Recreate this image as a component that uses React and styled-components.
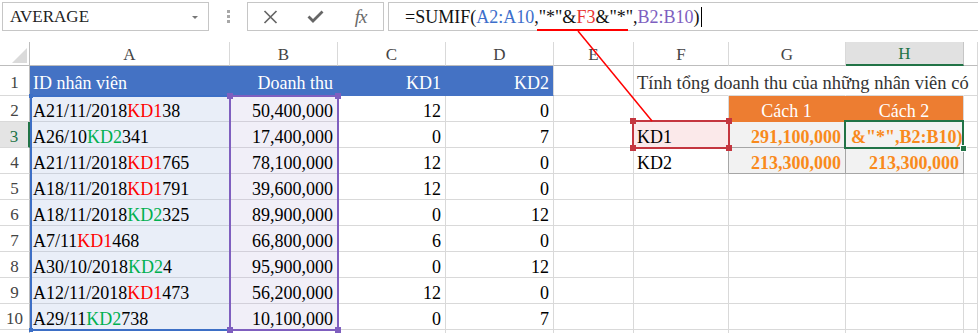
import React from "react";
import styled, { createGlobalStyle } from "styled-components";

const GlobalStyle = createGlobalStyle`
  html, body {
    margin: 0;
    padding: 0;
    background: #fff;
    overflow: hidden;
  }
  body {
    font-family: "Liberation Serif", "Times New Roman", serif;
  }
`;

const Page = styled.div`
  position: relative;
  width: 978px;
  height: 333px;
  overflow: hidden;
`;

/* ---------- formula bar ---------- */

const FormulaBar = styled.div`
  display: flex;
  align-items: flex-start;
  height: 42px;
  padding: 2px 0 0 2px;
  box-sizing: border-box;
`;

const NameBox = styled.div`
  width: 207px;
  height: 29px;
  box-sizing: border-box;
  border: 1px solid #c6c6c6;
  display: flex;
  align-items: center;
  justify-content: space-between;
  padding: 0 10px 0 7px;
  font-family: "Liberation Serif", "Times New Roman", serif;
  font-size: 17px;
  color: #222;
`;

const DropArrow = styled.span`
  width: 0;
  height: 0;
  border-left: 3px solid transparent;
  border-right: 3px solid transparent;
  border-top: 3px solid #777;
  margin-top: 1px;
`;

const Grip = styled.div`
  display: flex;
  flex-direction: column;
  gap: 2px;
  margin: 8px 17px 0 18px;
`;

const GripDot = styled.span`
  width: 3px;
  height: 3px;
  background: #a8a8a8;
`;

const ButtonBox = styled.div`
  width: 137px;
  height: 29px;
  box-sizing: border-box;
  border: 1px solid #c6c6c6;
  display: flex;
  margin-right: 4px;
`;

const IconSlot = styled.div`
  flex: 1;
  display: flex;
  align-items: center;
  justify-content: center;
  color: #666;
`;

const FxText = styled.span`
  font-style: italic;
  font-size: 19px;
  color: #6a6a6a;
  letter-spacing: -1px;
`;

const FormulaBox = styled.div`
  flex: 1;
  height: 29px;
  box-sizing: border-box;
  border: 1px solid #c6c6c6;
  border-right: none;
  display: flex;
  align-items: center;
  padding: 1px 0 0 16px;
  font-size: 18px;
  line-height: 20px;
  color: #111;
  white-space: nowrap;
`;

const Ref = styled.span`
  color: ${(p) => p.$c};
`;

const Caret = styled.span`
  display: inline-block;
  width: 1px;
  height: 20px;
  background: #000;
  margin-left: 1px;
`;

/* ---------- sheet grid ---------- */

const Sheet = styled.div`
  display: grid;
  grid-template-columns: 30px 200px 108px 108px 108px 80px 95px 117px 118px 14px;
  grid-template-rows: 24px 30px repeat(9, 26px) 26px;
`;

const Corner = styled.div`
  position: relative;
  box-sizing: border-box;
  border-right: 1px solid #bdbdbd;
  border-bottom: 1px solid #bdbdbd;
  &::after {
    content: "";
    position: absolute;
    right: 2px;
    bottom: 2px;
    width: 15px;
    height: 15px;
    background: #dadada;
    clip-path: polygon(100% 0, 100% 100%, 0 100%);
  }
`;

const ColHead = styled.div`
  box-sizing: border-box;
  display: flex;
  align-items: flex-end;
  justify-content: center;
  font-size: 17px;
  line-height: 20px;
  color: ${(p) => (p.$active ? "#217346" : "#444")};
  background: ${(p) => (p.$active ? "#e1e1e1" : "#fff")};
  border-right: 1px solid ${(p) => (p.$active ? "#c6c6c6" : "#d9d9d9")};
  border-bottom: ${(p) => (p.$active ? "2px solid #217346" : "1px solid #bdbdbd")};
`;

const RowHead = styled.div`
  box-sizing: border-box;
  display: flex;
  align-items: flex-end;
  justify-content: center;
  font-size: 17px;
  line-height: 20px;
  padding-bottom: ${(p) => p.$pb || 0}px;
  color: ${(p) => (p.$active ? "#217346" : "#444")};
  background: ${(p) => (p.$active ? "#e4e4e4" : "#fff")};
  border-right: ${(p) => (p.$active ? "2px solid #217346" : "1px solid #bdbdbd")};
  border-bottom: 1px solid #d9d9d9;
`;

const justify = { left: "flex-start", center: "center", right: "flex-end" };

const Cell = styled.div`
  box-sizing: border-box;
  min-width: 0;
  display: flex;
  align-items: flex-end;
  justify-content: ${(p) => justify[p.$align || "left"]};
  padding: 0 4px ${(p) => p.$pb || 0}px ${(p) => (p.$pl != null ? p.$pl : 3)}px;
  font-size: ${(p) => p.$size || 18}px;
  line-height: 20px;
  white-space: nowrap;
  background: ${(p) => p.$bg || "transparent"};
  color: ${(p) => p.$color || "#000"};
  font-weight: ${(p) => (p.$bold ? 700 : 400)};
  border-right: 1px solid ${(p) => p.$rb || "#d9d9d9"};
  border-bottom: 1px solid ${(p) => p.$bb || "#d9d9d9"};
`;

/* text that runs on over the empty cells to its right */
const Spill = styled(Cell)`
  position: relative;
  z-index: 1;
  overflow: visible;
`;

const Code = styled.span`
  color: ${(p) => (p.$code === "KD1" ? "#ff0000" : "#00b050")};
`;

/* ---------- overlays ---------- */

const Range = styled.div`
  position: absolute;
  z-index: 2;
  box-sizing: border-box;
  left: ${(p) => p.$x}px;
  top: ${(p) => p.$y}px;
  width: ${(p) => p.$w}px;
  height: ${(p) => p.$h}px;
  border: 2px solid ${(p) => p.$color};
  ${(p) => (p.$noRight ? "border-right: none;" : "")}
  pointer-events: none;
`;

const Handle = styled.span`
  position: absolute;
  width: ${(p) => p.$size || 6}px;
  height: ${(p) => p.$size || 6}px;
  background: ${(p) => p.$color};
  ${(p) => (p.$top ? "top" : "bottom")}: -${(p) => ((p.$size || 6) + 2) / 2}px;
  ${(p) => (p.$left ? "left" : "right")}: -${(p) => ((p.$size || 6) + 2) / 2}px;
`;

const FillHandle = styled.span`
  position: absolute;
  right: -5px;
  bottom: -5px;
  width: 5px;
  height: 5px;
  background: #217346;
  border: 1px solid #fff;
`;

const Callout = styled.svg`
  position: absolute;
  z-index: 3;
  left: 0;
  top: 0;
  pointer-events: none;
`;

/* ---------- data ---------- */

const BLUE = "#4472c4";
const ORANGE = "#ed7d31";
const AMBER = "#f98a1c";
const BOX = "#a6a6a6";

const rows = [
  { pre: "A21/11/2018", code: "KD1", post: "38", rev: "50,400,000", kd1: 12, kd2: 0 },
  { pre: "A26/10", code: "KD2", post: "341", rev: "17,400,000", kd1: 0, kd2: 7 },
  { pre: "A21/11/2018", code: "KD1", post: "765", rev: "78,100,000", kd1: 12, kd2: 0 },
  { pre: "A18/11/2018", code: "KD1", post: "791", rev: "39,600,000", kd1: 12, kd2: 0 },
  { pre: "A18/11/2018", code: "KD2", post: "325", rev: "89,900,000", kd1: 0, kd2: 12 },
  { pre: "A7/11", code: "KD1", post: "468", rev: "66,800,000", kd1: 6, kd2: 0 },
  { pre: "A30/10/2018", code: "KD2", post: "4", rev: "95,900,000", kd1: 0, kd2: 12 },
  { pre: "A12/11/2018", code: "KD1", post: "473", rev: "56,200,000", kd1: 12, kd2: 0 },
  { pre: "A29/11", code: "KD2", post: "738", rev: "10,100,000", kd1: 0, kd2: 7 },
];

// side table in F:H for rows 2..4
const side = {
  2: [
    {},
    { text: "Cách 1", $align: "center", $bg: ORANGE, $color: "#fff", $rb: ORANGE, $bb: ORANGE },
    { text: "Cách 2", $align: "center", $bg: ORANGE, $color: "#fff", $bb: ORANGE },
  ],
  3: [
    { text: "KD1", $bg: "#fbe9ea", $rb: BOX },
    { text: "291,100,000", $align: "right", $bold: true, $color: AMBER, $bg: "#f2f2f2", $rb: BOX, $bb: BOX },
    { text: '&"*",B2:B10)', $pl: 5, $bold: true, $color: AMBER, $bg: "#f2f2f2", $rb: BOX, $bb: BOX },
  ],
  4: [
    { text: "KD2", $rb: BOX },
    { text: "213,300,000", $align: "right", $bold: true, $color: AMBER, $bg: "#f2f2f2", $rb: BOX, $bb: BOX },
    { text: "213,300,000", $align: "right", $bold: true, $color: AMBER, $bg: "#f2f2f2", $rb: BOX, $bb: BOX },
  ],
};

const letters = ["A", "B", "C", "D", "E", "F", "G", "H", ""];

const Corners = ({ color, size, only }) =>
  [
    [true, true],
    [true, false],
    [false, true],
    [false, false],
  ]
    .filter(([, left]) => !only || (only === "left" ? left : !left))
    .map(([top, left]) => (
      <Handle key={`${top}${left}`} $top={top} $left={left} $color={color} $size={size} />
    ));

export default function App() {
  return (
    <>
      <GlobalStyle />
      <Page>
        <FormulaBar>
          <NameBox>
            AVERAGE
            <DropArrow />
          </NameBox>
          <Grip>
            <GripDot />
            <GripDot />
            <GripDot />
          </Grip>
          <ButtonBox>
            <IconSlot>
              <svg width="15" height="14" viewBox="0 0 15 14">
                <path d="M1.5 1 L13.5 13 M13.5 1 L1.5 13" stroke="#666" strokeWidth="1.7" fill="none" />
              </svg>
            </IconSlot>
            <IconSlot>
              <svg width="17" height="13" viewBox="0 0 17 13">
                <path d="M1.5 6.5 L6 11 L15.5 1.5" stroke="#666" strokeWidth="2.8" fill="none" />
              </svg>
            </IconSlot>
            <IconSlot>
              <FxText>fx</FxText>
            </IconSlot>
          </ButtonBox>
          <FormulaBox>
            =SUMIF(<Ref $c="#3d6fcb">A2:A10</Ref>,"*"&amp;<Ref $c="#e8312f">F3</Ref>&amp;"*",
            <Ref $c="#7e5fc0">B2:B10</Ref>)
            <Caret />
          </FormulaBox>
        </FormulaBar>

        <Sheet>
          <Corner />
          {letters.map((l, i) => (
            <ColHead key={i} $active={l === "H"}>
              {l}
            </ColHead>
          ))}

          <RowHead $pb={2}>1</RowHead>
          <Cell $pb={2} $bg={BLUE} $color="#fff" $rb={BLUE} $bb={BLUE}>
            ID nhân viên
          </Cell>
          <Cell $pb={2} $align="right" $bg={BLUE} $color="#fff" $rb={BLUE} $bb={BLUE}>
            Doanh thu
          </Cell>
          <Cell $pb={2} $align="right" $bg={BLUE} $color="#fff" $rb={BLUE} $bb={BLUE}>
            KD1
          </Cell>
          <Cell $pb={2} $align="right" $bg={BLUE} $color="#fff" $bb={BLUE}>
            KD2
          </Cell>
          <Cell />
          <Spill $pb={2} $size={18.5} $color="#333" $rb="transparent">
            Tính tổng doanh thu của những nhân viên có
          </Spill>
          <Cell $rb="transparent" />
          <Cell $rb="transparent" />
          <Cell />

          {rows.map((r, i) => {
            const n = i + 2;
            const extra = side[n] || [{}, {}, {}];
            return (
              <React.Fragment key={n}>
                <RowHead $active={n === 3}>{n}</RowHead>
                <Cell $bg="#e9eef8" $bb="#cdd2dc">
                  {r.pre}
                  <Code $code={r.code}>{r.code}</Code>
                  {r.post}
                </Cell>
                <Cell $align="right" $bg="#f1eff8" $bb="#d3d0da">
                  {r.rev}
                </Cell>
                <Cell $align="right">{r.kd1}</Cell>
                <Cell $align="right">{r.kd2}</Cell>
                <Cell />
                {extra.map(({ text, ...props }, k) => (
                  <Cell key={k} {...props}>
                    {text}
                  </Cell>
                ))}
                <Cell />
              </React.Fragment>
            );
          })}

          <RowHead />
          {letters.map((l, i) => (
            <Cell key={i} />
          ))}
        </Sheet>

        <Range $x={30} $y={95} $w={199} $h={236} $color="#3d6fc6" $noRight>
          <Corners color="#3d6fc6" size={4} only="left" />
        </Range>
        <Range $x={229} $y={95} $w={110} $h={236} $color="#7f5fbf">
          <Corners color="#7f5fbf" />
        </Range>
        <Range $x={632} $y={120} $w={98} $h={29} $color="#c4363f">
          <Corners color="#c4363f" />
        </Range>
        <Range $x={844} $y={120} $w={120} $h={29} $color="#217346">
          <FillHandle />
        </Range>

        <Callout width="978" height="333" viewBox="0 0 978 333">
          <line x1="537" y1="30" x2="628" y2="30" stroke="#ff0000" strokeWidth="2" />
          <line x1="578" y1="31" x2="652" y2="121" stroke="#ff0000" strokeWidth="1.5" />
        </Callout>
      </Page>
    </>
  );
}
